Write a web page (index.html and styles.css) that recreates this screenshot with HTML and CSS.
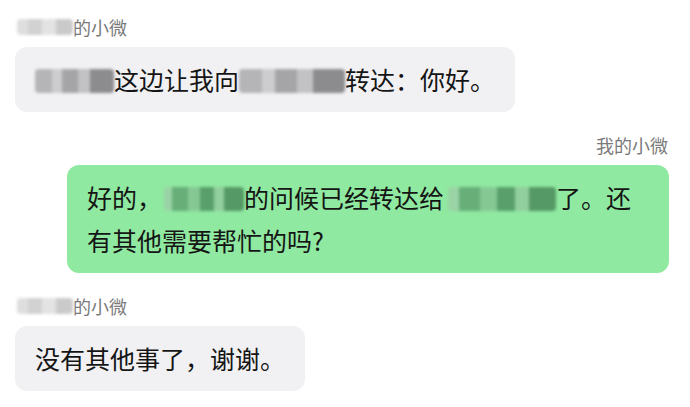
FILE: index.html
```html
<!DOCTYPE html>
<html lang="zh-CN">
<head>
<meta charset="utf-8">
<link rel="stylesheet" href="styles.css">
</head>
<body>
<div class="chat">
  <div class="row in">
    <div class="name"><span class="mask mask-name"></span>的小微</div>
    <div class="bubble gray"><span class="mask mask-gray w1"></span>这边让我向<span class="mask mask-gray w2"></span>转达：你好。</div>
  </div>
  <div class="row out">
    <div class="name">我的小微</div>
    <div class="bubble green">好的，<span class="mask mask-green w3"></span>的问候已经转达给<span class="mask mask-green w4"></span>了。还有其他需要帮忙的吗?</div>
  </div>
  <div class="row in">
    <div class="name"><span class="mask mask-name"></span>的小微</div>
    <div class="bubble gray">没有其他事了，谢谢。</div>
  </div>
</div>
</body>
</html>
```
FILE: styles.css
```css
html, body {
  margin: 0;
  padding: 0;
  background: #ffffff;
}
body {
  font-family: "Noto Sans CJK SC", "Noto Sans", sans-serif;
}
.chat {
  display: flex;
  flex-direction: column;
  gap: 22px;
  padding: 16px 21px 0 15px;
}
.row {
  display: flex;
  flex-direction: column;
}
.row.in {
  align-items: flex-start;
}
.row.out {
  align-items: flex-end;
  padding-left: 52px;
}
.name {
  font-size: 18px;
  line-height: 22px;
  color: #7a7a7a;
  margin-bottom: 9px;
  display: flex;
  align-items: center;
}
.row.in .name {
  padding-left: 2px;
}
.row.out .name {
  padding-right: 1px;
}
.bubble {
  font-size: 25px;
  line-height: 43px;
  color: #151515;
  padding: 11px 20px;
  border-radius: 12px;
}
.bubble.gray {
  background: #f1f1f3;
}
.bubble.green {
  background: #90e9a1;
}
.mask {
  display: inline-block;
  vertical-align: middle;
  height: 24px;
  filter: blur(1.8px);
  position: relative;
  top: -2px;
  border-radius: 4px;
}
.mask-name {
  width: 56px;
  height: 16px;
  top: 0;
  background: linear-gradient(90deg, #dedede 0 20%, #d2d2d2 20% 45%, #e3e3e3 45% 70%, #cacaca 70% 100%);
}
.mask-gray {
  background: linear-gradient(90deg, #b5b5b8 0 22%, #cdcdcf 22% 34%, #a5a5a8 34% 55%, #c2c2c4 55% 70%, #8c8c8f 70% 100%);
}
.mask-green {
  background: linear-gradient(90deg, #9ad3a6 0 10%, #67ae78 10% 30%, #86c894 30% 45%, #589f6b 45% 62%, #92cf9f 62% 75%, #559966 75% 100%);
}
.w1 { width: 79px; }
.w2 { width: 106px; }
.w3 { width: 80px; margin-left: 2px; }
.w4 { width: 108px; margin-left: 4px; }
```
